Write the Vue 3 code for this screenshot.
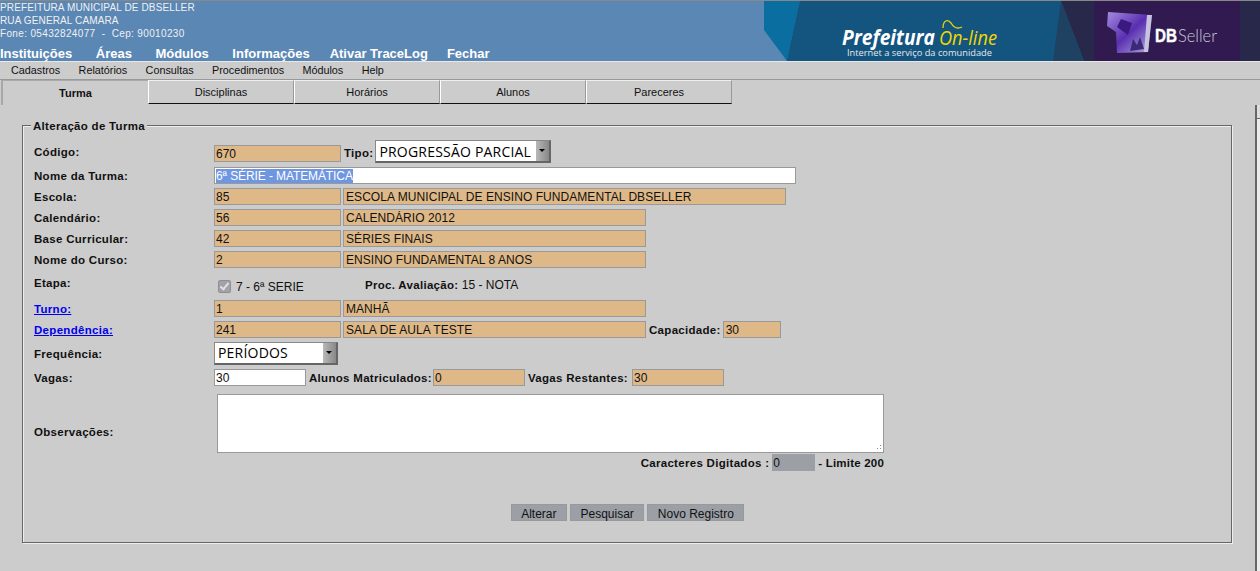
<template>
  <div class="page">
    <header class="top-header">
      <div class="top-left">
        <div class="info">PREFEITURA MUNICIPAL DE DBSELLER</div>
        <div class="info">RUA GENERAL CAMARA</div>
        <div class="info phone">Fone: 05432824077 &nbsp;-&nbsp; Cep: 90010230</div>
        <nav class="main-nav">
          <a v-for="item in mainNav" :key="item">{{ item }}</a>
        </nav>
      </div>
      <svg class="banner" viewBox="764 0 496 60" width="496" height="60">
        <defs>
          <linearGradient id="cube" x1="0" y1="0" x2="1" y2="1">
            <stop offset="0" stop-color="#a48ce0" />
            <stop offset="0.5" stop-color="#5a2fb0" />
            <stop offset="1" stop-color="#b8b0e0" />
          </linearGradient>
        </defs>
        <rect x="764" y="0" width="496" height="60" fill="#28284a" />
        <polygon points="764,0 800,0 787,60 764,60" fill="#5b87b5" />
        <polygon points="764,0 800,0 787,60 764,29" fill="#0a6fa0" />
        <polygon points="800,0 1061,0 1084,60 787,60" fill="#14557f" />
        <polygon points="1061,0 1084,60 1053,60" fill="#1f4262" />
        <rect x="1094" y="0" width="146" height="60" fill="#301a50" />
        <text x="842" y="44" class="pref" textLength="93" lengthAdjust="spacingAndGlyphs">Prefeitura</text>
        <text x="939" y="44" class="online" textLength="58" lengthAdjust="spacingAndGlyphs">On-line</text>
        <path d="M943 27 C943 19 948 18 951 22 C954 27 958 28 962 26" fill="none" stroke="#f0d800" stroke-width="1.3" />
        <text x="847" y="55" class="slogan" textLength="145" lengthAdjust="spacingAndGlyphs">Internet a serviço da comunidade</text>
        <polygon points="1108,11 1152,14 1148,51 1117,52 1116,31 1107,25" fill="url(#cube)" />
        <polygon points="1147,14 1152,14 1148,51 1144,51" fill="#c8c4e0" />
        <polygon points="1121,18 1132,22 1128,34 1117,26" fill="#3a1a80" />
        <path d="M1130 50 L1133 38 L1137 44 L1140 36 L1144 48 Z" fill="#3a2a78" />
        <text x="1155" y="41" class="db" textLength="22" lengthAdjust="spacingAndGlyphs">DB</text>
        <text x="1178" y="41" class="seller" textLength="39" lengthAdjust="spacingAndGlyphs">Seller</text>
      </svg>
    </header>

    <div class="menu-bar">
      <a v-for="item in menu" :key="item">{{ item }}</a>
    </div>

    <div class="tabs">
      <div
        v-for="(tab, index) in tabs"
        :key="tab"
        class="tab"
        :class="{ active: index === 0 }"
      >
        {{ tab }}
      </div>
    </div>

    <fieldset class="form-box">
      <legend>Alteração de Turma</legend>

      <div class="row first">
        <label>Código:</label>
        <input class="field short ro" value="670" readonly />
        <b class="inline-label tipo">Tipo:</b>
        <div class="select-box tipo-select">
          <select><option>PROGRESSÃO PARCIAL</option></select>
          <span class="arrow"></span>
        </div>
      </div>

      <div class="row">
        <label>Nome da Turma:</label>
        <input ref="nameInput" class="field name-input" value="6ª SÉRIE - MATEMÁTICA" />
      </div>

      <div class="row" v-for="r in schoolRows" :key="r.label">
        <label>{{ r.label }}</label>
        <input class="field short ro" :value="r.code" readonly />
        <input class="field ro desc" :class="r.wide ? 'wide' : 'mid'" :value="r.text" readonly />
      </div>

      <div class="row etapa">
        <label>Etapa:</label>
        <div class="etapa-check">
          <input type="checkbox" checked disabled />
          <span>7 - 6ª SERIE</span>
        </div>
        <span class="proc"><b>Proc. Avaliação:</b> 15 - NOTA</span>
      </div>

      <div class="row">
        <label><a href="#">Turno:</a></label>
        <input class="field short ro" value="1" readonly />
        <input class="field ro desc mid" value="MANHÃ" readonly />
      </div>

      <div class="row">
        <label><a href="#">Dependência:</a></label>
        <input class="field short ro" value="241" readonly />
        <input class="field ro desc mid" value="SALA DE AULA TESTE" readonly />
        <b class="inline-label cap">Capacidade:</b>
        <input class="field ro tiny" value="30" readonly />
      </div>

      <div class="row freq">
        <label>Frequência:</label>
        <div class="select-box freq-select">
          <select><option>PERÍODOS</option></select>
          <span class="arrow"></span>
        </div>
      </div>

      <div class="row vagas">
        <label>Vagas:</label>
        <input class="field count" value="30" />
        <b class="inline-label matriculados">Alunos Matriculados:</b>
        <input class="field ro count" value="0" readonly />
        <b class="inline-label restantes">Vagas Restantes:</b>
        <input class="field ro count" value="30" readonly />
      </div>

      <div class="row obs">
        <label>Observações:</label>
        <textarea></textarea>
      </div>

      <div class="char-row">
        <b>Caracteres Digitados :</b>
        <input class="field counter" value="0" readonly />
        <b class="limit">- Limite 200</b>
      </div>

      <div class="actions">
        <button>Alterar</button>
        <button>Pesquisar</button>
        <button>Novo Registro</button>
      </div>
    </fieldset>

    <div class="side-strip"><span></span></div>
  </div>
</template>

<script setup>
import { ref, onMounted } from 'vue'

const mainNav = ['Instituições', 'Áreas', 'Módulos', 'Informações', 'Ativar TraceLog', 'Fechar']
const menu = ['Cadastros', 'Relatórios', 'Consultas', 'Procedimentos', 'Módulos', 'Help']
const tabs = ['Turma', 'Disciplinas', 'Horários', 'Alunos', 'Pareceres']

const schoolRows = [
  { label: 'Escola:', code: '85', text: 'ESCOLA MUNICIPAL DE ENSINO FUNDAMENTAL DBSELLER', wide: true },
  { label: 'Calendário:', code: '56', text: 'CALENDÁRIO 2012' },
  { label: 'Base Curricular:', code: '42', text: 'SÉRIES FINAIS' },
  { label: 'Nome do Curso:', code: '2', text: 'ENSINO FUNDAMENTAL 8 ANOS' }
]

const nameInput = ref(null)

onMounted(() => {
  nameInput.value.focus()
  nameInput.value.select()
})
</script>

<style>
html, body {
  margin: 0;
  background: #cccccc;
  overflow: hidden;
}
</style>

<style scoped>
.page {
  position: relative;
  height: 571px;
  overflow: hidden;
  background: #cccccc;
  font-family: "Liberation Sans", Arial, sans-serif;
  color: #111;
}

.top-header {
  display: flex;
  justify-content: space-between;
  height: 60px;
  border-top: 1px solid #888;
  border-bottom: 1px solid #e8e8e8;
  background: #5b87b5;
}

.top-left {
  display: flex;
  flex-direction: column;
  color: #fff;
}

.info {
  font-size: 10px;
  line-height: 13px;
  letter-spacing: 0.13px;
  color: #f0f0f0;
}

.info.phone {
  letter-spacing: 0.35px;
}

.main-nav {
  display: flex;
  gap: 23.5px;
  margin-top: 7px;
  font-size: 13px;
  font-weight: bold;
  line-height: 14px;
}

.main-nav a:nth-child(5) {
  margin-left: -3.5px;
}

.main-nav a:nth-child(6) {
  margin-left: -4.5px;
}

.banner {
  display: block;
}

.pref {
  font: italic bold 21px "Open Sans", sans-serif;
  fill: #fff;
}

.online {
  font: italic 20px "Open Sans", sans-serif;
  fill: #f0d800;
}

.slogan {
  font: 9.5px "Open Sans", sans-serif;
  fill: #e4e8ec;
}

.db {
  font: bold 18px "Liberation Sans", sans-serif;
  fill: #fff;
  stroke: #fff;
  stroke-width: 0.4;
}

.seller {
  font: 300 18px "Lato", sans-serif;
  fill: #ccc8d8;
}

.menu-bar {
  display: flex;
  gap: 18.4px;
  height: 17px;
  padding-left: 11px;
  border-bottom: 1px solid #999;
  font-size: 10.8px;
  line-height: 17px;
}

.tabs {
  display: flex;
  height: 25px;
  padding-left: 1px;
}

.tab {
  width: 144px;
  height: 22px;
  border-top: 1px solid #eee;
  border-left: 1px solid #fff;
  border-right: 1px solid #999;
  border-bottom: 1px solid #111;
  font-size: 11px;
  line-height: 22px;
  text-align: center;
}

.tab.active {
  border: none;
  border-left: 2px solid #a8a8a8;
  border-top: 1px solid #aaa;
  width: 145px;
  height: 24px;
  line-height: 25px;
  font-weight: bold;
}

.form-box {
  width: 1197px;
  height: 415px;
  margin: 13px 0 0 22px;
  padding: 8px 0 0 11px;
  box-sizing: content-box;
  border: 1px solid #666;
  box-shadow: inset 1px 1px 0 #eee, 1px 1px 0 #eee;
  min-width: 0;
}

legend {
  margin-left: -3px;
  padding: 2px 2px 0;
  background: #ccc;
  font-size: 11.5px;
  font-weight: bold;
  letter-spacing: 0.3px;
  line-height: 13px;
}

.row {
  display: flex;
  align-items: center;
  height: 21px;
  font-size: 11.5px;
}

.row > label {
  flex: none;
  width: 180px;
  font-weight: bold;
  letter-spacing: 0.3px;
}

.row a {
  color: #0000ee;
}

.row.first {
  height: 24px;
}

.row.first > label {
  margin-top: -2px;
}

.row.etapa {
  height: 28px;
}

.row.etapa > label {
  margin-top: -2px;
}

.row.freq {
  height: 26px;
}

.row.freq > label {
  margin-top: 2px;
}

.row.vagas {
  height: 23px;
}

.row.obs {
  height: 65px;
  align-items: flex-start;
  padding-top: 5px;
  box-sizing: border-box;
}

.row.obs > label {
  margin-top: 32px;
}

.field {
  box-sizing: border-box;
  height: 17px;
  padding: 1px 1px 0;
  border: 1px solid #999;
  border-radius: 0;
  background: #fff;
  color: #111;
  font: 12px "Liberation Sans", Arial, sans-serif;
  outline: none;
}

.field.ro {
  background: #deb887;
}

.short {
  width: 127px;
}

.desc {
  margin-left: 2px;
  padding-left: 2px;
  letter-spacing: 0.06px;
}

.wide {
  width: 443px;
}

.mid {
  width: 303px;
}

.tiny {
  width: 58px;
  padding-left: 2px;
}

.count {
  width: 92px;
}

.name-input {
  width: 582px;
  letter-spacing: -0.1px;
}

.name-input::selection {
  background: #6f96e0;
  color: #fff;
}

.inline-label {
  margin: 0 3px;
  letter-spacing: 0.3px;
}

.inline-label.tipo,
.inline-label.cap {
  margin-right: 2px;
}

.inline-label.matriculados {
  margin-right: 1px;
}

.inline-label.restantes {
  margin-right: 4px;
}

.select-box {
  display: flex;
  box-sizing: border-box;
  height: 23px;
  border: 1px solid #888;
  border-right: 2px solid #666;
  border-bottom: 2px solid #666;
  background: #fff;
}

.select-box select {
  flex: 1;
  min-width: 0;
  padding: 0 0 0 3px;
  border: none;
  background: #fff;
  appearance: none;
  font: 14px "Open Sans", sans-serif;
  letter-spacing: 0.2px;
  color: #000;
  outline: none;
}

.arrow {
  flex: none;
  position: relative;
  width: 13px;
  background: linear-gradient(90deg, #b8b8b8, #888);
}

.arrow::after {
  content: "";
  position: absolute;
  left: 3px;
  top: 8px;
  border-left: 3px solid transparent;
  border-right: 3px solid transparent;
  border-top: 3px solid #000;
}

.tipo-select {
  width: 176px;
  margin-top: -3px;
}

.freq-select {
  width: 124px;
}

.etapa-check {
  display: flex;
  align-items: center;
  width: 151px;
  margin-top: 5px;
  font-size: 12px;
}

.etapa-check input {
  position: relative;
  width: 13px;
  height: 13px;
  margin: 0 5px 0 4px;
  appearance: none;
  border: 1px solid #8e8e94;
  border-radius: 2px;
  background: #a2a2a8;
}

.etapa-check input::after {
  content: "";
  position: absolute;
  left: 3px;
  top: 0;
  width: 3px;
  height: 7px;
  border: solid #e0e0e0;
  border-width: 0 2px 2px 0;
  transform: rotate(40deg);
}

.proc {
  font-size: 12px;
  margin-top: 2px;
}

.proc b {
  font-size: 11.5px;
  letter-spacing: 0.3px;
}

textarea {
  box-sizing: border-box;
  width: 667px;
  height: 59px;
  margin: 0 0 0 3px;
  padding: 2px;
  border: 1px solid #999;
  border-radius: 0;
  outline: none;
  resize: none;
  font: 12px "Liberation Sans", Arial, sans-serif;
  background:
    linear-gradient(#888, #888) no-repeat right 5px bottom 3px / 1px 1px,
    linear-gradient(#888, #888) no-repeat right 2px bottom 3px / 1px 1px,
    linear-gradient(#888, #888) no-repeat right 2px bottom 6px / 1px 1px,
    #fff;
}

.char-row {
  display: flex;
  align-items: center;
  justify-content: flex-end;
  gap: 3px;
  width: 850px;
  height: 17px;
  font-size: 11.5px;
}

.char-row b {
  letter-spacing: 0.3px;
}

.char-row b.limit {
  letter-spacing: 0.2px;
}

.counter {
  width: 43px;
  border: none;
  background: #9ca0a6;
}

.actions {
  display: flex;
  justify-content: center;
  gap: 3px;
  margin-top: 33px;
  padding-right: 10px;
}

.actions button {
  box-sizing: border-box;
  height: 17px;
  padding: 2px 9.5px 0;
  border: 1px solid #999;
  border-radius: 0;
  background: #9ca0a6;
  color: #111;
  font: 12px "Liberation Sans", Arial, sans-serif;
}

.side-strip {
  position: absolute;
  top: 105px;
  right: 0;
  bottom: 0;
  width: 3px;
  border-left: 2px solid #666;
  background: #ececec;
}

.side-strip span {
  display: block;
  height: 13px;
  border-bottom: 1px solid #666;
  background: #ddd;
}
</style>
